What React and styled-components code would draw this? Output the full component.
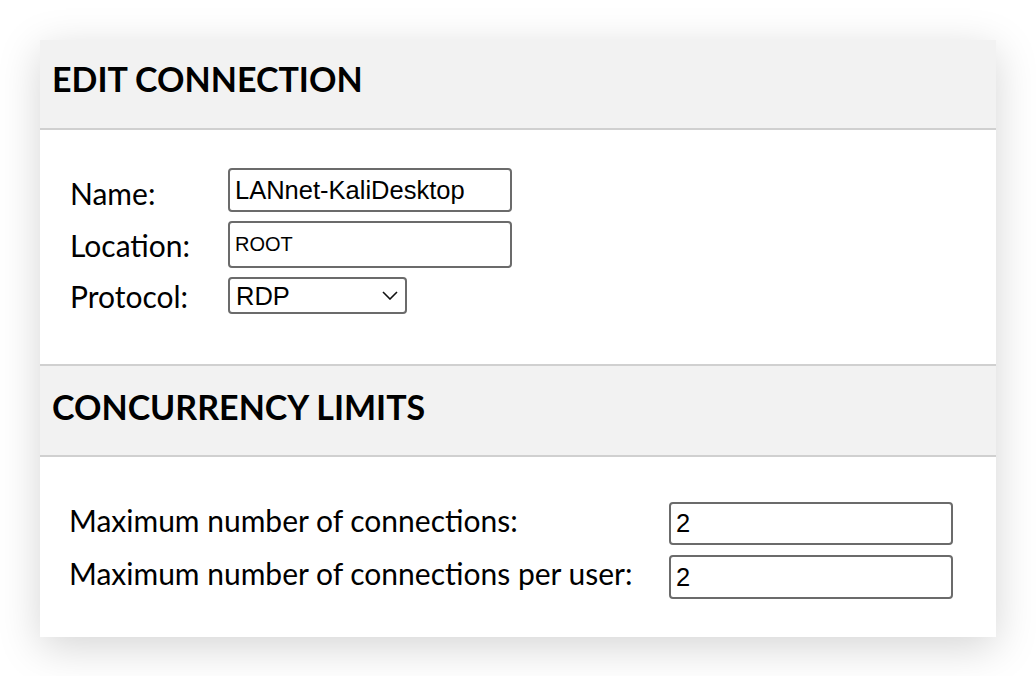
import React from 'react';
import styled, { createGlobalStyle } from 'styled-components';

const GlobalStyle = createGlobalStyle`
  body {
    margin: 0;
    background: #ffffff;
    font-family: Lato, "Open Sans", sans-serif;
  }
`;

const Page = styled.div`
  padding: 40px;
`;

const Card = styled.div`
  width: 956px;
  background: #fff;
  box-shadow: 0 10px 40px rgba(0, 0, 0, 0.17);
`;

const SectionHeader = styled.div`
  box-sizing: border-box;
  height: ${(p) => (p.$top ? '90px' : '93px')};
  background: #f2f2f2;
  border-top: ${(p) => (p.$top ? 'none' : '2px solid #d0d0d0')};
  border-bottom: 2px solid #d0d0d0;
  padding: ${(p) => (p.$top ? '19px' : '21px')} 12px 0;
`;

const Title = styled.h2`
  margin: 0;
  font-family: Lato, sans-serif;
  font-weight: 700;
  font-size: 34px;
  line-height: 1.2;
  color: #000;
  text-transform: uppercase;
`;

const SectionBody = styled.div`
  padding: ${(p) => p.$pad};
  display: flex;
  flex-direction: column;
  gap: ${(p) => p.$gap};
`;

const FieldRow = styled.div`
  display: grid;
  grid-template-columns: ${(p) => p.$labelWidth} auto;
  align-items: ${(p) => p.$align || 'center'};
`;

const Label = styled.label`
  font-family: Lato, sans-serif;
  font-size: 30px;
  line-height: 1.2;
  color: #000;
  padding-top: ${(p) => p.$shift || '0'};
`;

const TextInput = styled.input`
  box-sizing: border-box;
  width: 284px;
  height: ${(p) => p.$h || '44px'};
  border: 2px solid #6b6b6b;
  border-radius: 4px;
  padding: 0 5px;
  font-family: "Liberation Sans", Arial, sans-serif;
  font-size: ${(p) => p.$size || '25.5px'};
  color: #000;
  background: #fff;
  outline: none;
`;

const SelectWrap = styled.div`
  position: relative;
  width: 179px;
  height: 37px;
`;

const Select = styled.select`
  appearance: none;
  box-sizing: border-box;
  width: 100%;
  height: 100%;
  border: 2px solid #6b6b6b;
  border-radius: 4px;
  padding: 0 6px;
  font-family: "Liberation Sans", Arial, sans-serif;
  font-size: 25.5px;
  color: #000;
  background: #fff;
  outline: none;
`;

const Chevron = styled.svg`
  position: absolute;
  right: 9px;
  top: 14px;
  pointer-events: none;
`;

export default function App() {
  return (
    <Page>
      <GlobalStyle />
      <Card>
        <SectionHeader $top>
          <Title>Edit Connection</Title>
        </SectionHeader>
        <SectionBody $pad="38px 0 50px 30px" $gap="9px">
          <FieldRow $labelWidth="158px">
            <Label $shift="6px">Name:</Label>
            <TextInput defaultValue="LANnet-KaliDesktop" />
          </FieldRow>
          <FieldRow $labelWidth="158px">
            <Label>Location:</Label>
            <TextInput defaultValue="ROOT" $size="20px" $h="47px" />
          </FieldRow>
          <FieldRow $labelWidth="158px">
            <Label>Protocol:</Label>
            <SelectWrap>
              <Select defaultValue="RDP">
                <option>VNC</option>
                <option>RDP</option>
                <option>SSH</option>
              </Select>
              <Chevron width="16" height="9" viewBox="0 0 16 9">
                <path d="M1 1 L8 8 L15 1" fill="none" stroke="#111" strokeWidth="1.6" />
              </Chevron>
            </SelectWrap>
          </FieldRow>
        </SectionBody>
        <SectionHeader>
          <Title>Concurrency Limits</Title>
        </SectionHeader>
        <SectionBody $pad="45px 0 38px 29px" $gap="10px">
          <FieldRow $labelWidth="600px" $align="start">
            <Label>Maximum number of connections:</Label>
            <TextInput defaultValue="2" $h="43px" />
          </FieldRow>
          <FieldRow $labelWidth="600px" $align="start">
            <Label>Maximum number of connections per user:</Label>
            <TextInput defaultValue="2" />
          </FieldRow>
        </SectionBody>
      </Card>
    </Page>
  );
}
